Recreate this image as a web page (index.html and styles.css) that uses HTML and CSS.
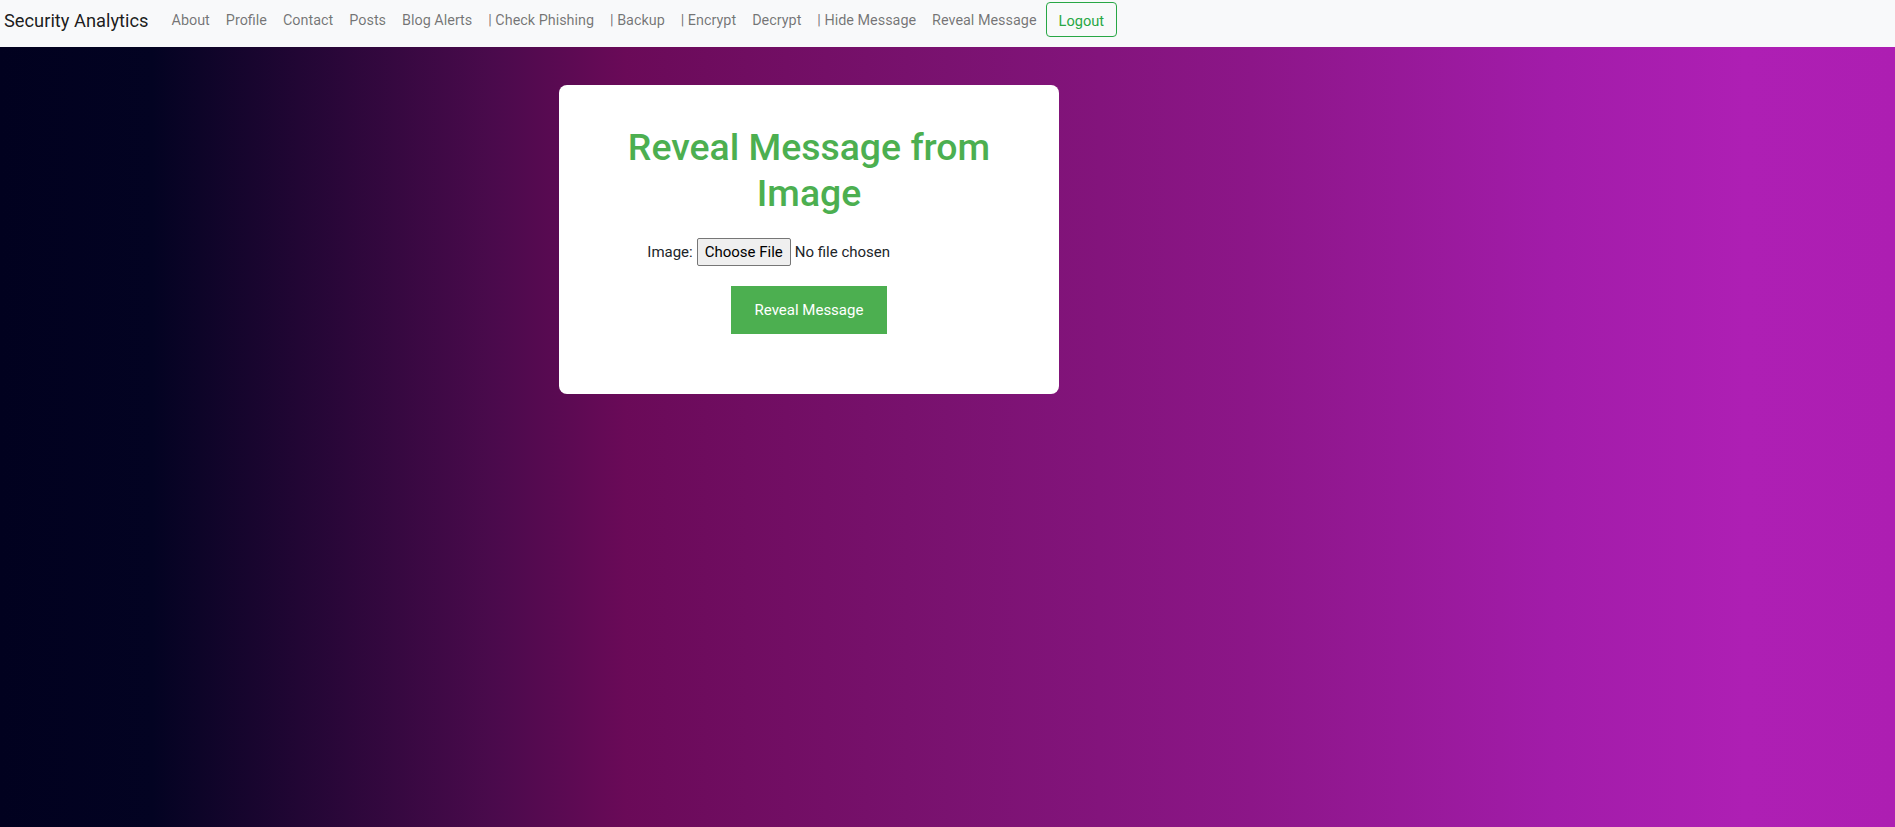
FILE: index.html
```html
<!DOCTYPE html>
<html lang="en">
<head>
<meta charset="utf-8">
<title>Reveal Message</title>
<link rel="stylesheet" href="styles.css">
</head>
<body>
<nav class="navbar">
  <a class="brand" href="#">Security Analytics</a>
  <ul class="nav-links">
    <li><a href="#">About</a></li>
    <li><a href="#">Profile</a></li>
    <li><a href="#">Contact</a></li>
    <li><a href="#">Posts</a></li>
    <li><a href="#">Blog Alerts</a></li>
    <li><a href="#">| Check Phishing</a></li>
    <li><a href="#">| Backup</a></li>
    <li><a href="#">| Encrypt</a></li>
    <li><a href="#">Decrypt</a></li>
    <li><a href="#">| Hide Message</a></li>
    <li><a href="#">Reveal Message</a></li>
  </ul>
  <button class="btn-logout" type="button">Logout</button>
</nav>
<main class="page">
  <section class="card">
    <h1 class="card-title">Reveal Message from Image</h1>
    <form class="reveal-form">
      <div class="field">
        <label class="field-label" for="image">Image:</label>
        <input class="file-input" id="image" type="file">
      </div>
      <button class="btn-reveal" type="button">Reveal Message</button>
    </form>
  </section>
</main>
</body>
</html>
```
FILE: styles.css
```css
* { box-sizing: border-box; }
html, body { height: 100%; }
body {
  margin: 0;
  font-family: Roboto, "Liberation Sans", sans-serif;
  background: linear-gradient(90deg, #01011f 0%, #030322 8%, #4a0a4c 26%, #6a0a58 33%, #7a1270 50%, #8c1688 66%, #a21ca9 82%, #ae1fb4 92%, #ad1eb2 100%);
  min-height: 100%;
}
.navbar {
  display: flex;
  align-items: center;
  height: 47px;
  padding: 2px 0 10px 4px;
  background: #f8f9fa;
}
.brand {
  padding-top: 2px;
  font-size: 18.3px;
  color: rgba(0,0,0,.9);
  text-decoration: none;
  margin-right: 15px;
}
.nav-links {
  display: flex;
  list-style: none;
  margin: 0;
  padding: 2px 0 0;
}
.nav-links a {
  display: block;
  padding: 0 8px;
  font-size: 14.4px;
  line-height: 24px;
  color: rgba(0,0,0,.55);
  text-decoration: none;
}
.btn-logout {
  height: 35px;
  margin-left: 1px;
  padding: 2px 12px 0;
  font-family: inherit;
  font-size: 14.6px;
  color: #28a745;
  background: transparent;
  border: 1px solid #28a745;
  border-radius: 4px;
}
.page {
  padding: 38px 0 0 559px;
}
.card {
  width: 500px;
  height: 309px;
  background: #fff;
  border-radius: 8px;
  padding: 39px 20px 0;
  text-align: center;
}
.card-title {
  margin: 0 0 22px;
  font-size: 37.4px;
  line-height: 46px;
  font-weight: 500;
  color: #4caf50;
}
.reveal-form {
  display: flex;
  flex-direction: column;
  align-items: center;
}
.field {
  display: flex;
  align-items: center;
  gap: 4px;
  font-size: 15px;
  color: #212529;
}
.file-input {
  width: 274px;
  font-family: inherit;
  font-size: 15px;
  color: #212529;
}
.file-input::file-selector-button {
  height: 28px;
  padding: 0 7px;
  margin-right: 4px;
  font-family: inherit;
  font-size: 15px;
  background: #efefef;
  border: 1px solid #767676;
  border-radius: 2px;
  color: #000;
}
.btn-reveal {
  margin-top: 20px;
  width: 156px;
  height: 48px;
  font-family: inherit;
  font-size: 15px;
  color: #fff;
  background: #4caf50;
  border: none;
}
```
